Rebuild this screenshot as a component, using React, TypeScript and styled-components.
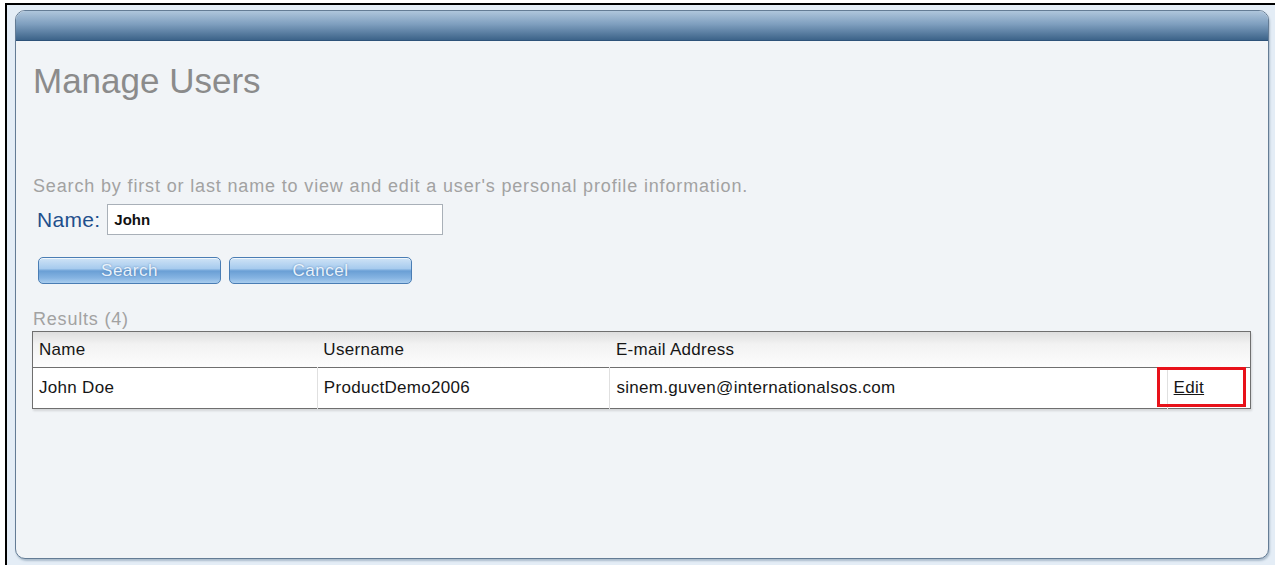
import styled, { createGlobalStyle } from "styled-components";

const GlobalStyle = createGlobalStyle`
    html, body {
        margin: 0;
        padding: 0;
        background: #fff;
    }
    body {
        font-family: "Liberation Sans", Arial, sans-serif;
    }
`;

const Frame = styled.div`
    margin: 3px 0 0 5px;
    height: 562px;
    box-sizing: border-box;
    border-top: 2px solid #000;
    border-left: 2px solid #000;
    background: #e4edf6;
    padding: 5px 6px 6px 8px;
`;

const Panel = styled.div`
    height: 100%;
    box-sizing: border-box;
    display: flex;
    flex-direction: column;
    border: 1px solid #647c95;
    border-radius: 10px;
    background: #f1f4f7;
    box-shadow: 1px 2px 2px rgba(70, 100, 130, 0.35);
    overflow: hidden;
`;

const TitleBar = styled.div`
    height: 29px;
    flex: none;
    background: linear-gradient(#afc6dc, #7f9fbf 45%, #3c6389);
    border-bottom: 1px solid #2d5279;
`;

const Body = styled.div`
    flex: 1;
    padding: 0 16px;
    display: flex;
    flex-direction: column;
`;

const Title = styled.h1`
    margin: 20px 0 0 1px;
    font-size: 35px;
    line-height: 40px;
    font-weight: normal;
    color: #8b8b8b;
`;

const Hint = styled.p`
    margin: 75px 0 0 1px;
    font-size: 18px;
    line-height: 20px;
    letter-spacing: 0.85px;
    color: #a2a2a2;
`;

const FieldRow = styled.div`
    margin: 8px 0 0 5px;
    display: flex;
    align-items: center;
    gap: 7px;
`;

const Label = styled.label`
    font-size: 21px;
    letter-spacing: 0.3px;
    color: #1f4f8c;
`;

const Input = styled.input`
    width: 336px;
    height: 31px;
    box-sizing: border-box;
    border: 1px solid #a9b0b8;
    background: #fff;
    padding: 0 6px;
    font-family: inherit;
    font-size: 15px;
    font-weight: bold;
    color: #111;
    outline: none;
`;

const Buttons = styled.div`
    margin: 22px 0 0 6px;
    display: flex;
    gap: 8px;
`;

const Button = styled.button`
    width: ${p => p.$w}px;
    height: 27px;
    border: 1px solid #4a7db4;
    border-radius: 5px;
    background: linear-gradient(#cfe3f6 0%, #a7cbee 42%, #6a9fd5 52%, #86b4e2 80%, #a9cdef 100%);
    box-shadow: inset 0 1px 0 rgba(255, 255, 255, 0.7);
    color: #e9f2fb;
    font-family: inherit;
    font-size: 17px;
    letter-spacing: 0.5px;
    text-shadow: 0 0 2px rgba(40, 90, 150, 0.6);
    padding: 0;
    cursor: pointer;
`;

const Results = styled.div`
    margin: 25px 0 0 1px;
    font-size: 18px;
    line-height: 20px;
    letter-spacing: 0.8px;
    color: #a2a2a2;
`;

const Table = styled.table`
    margin-top: 2px;
    width: 1219px;
    border-collapse: collapse;
    border: 1px solid #6f6f6f;
    box-shadow: 1px 2px 2px rgba(0, 0, 0, 0.12);
    font-size: 17px;
    letter-spacing: 0.3px;
    color: #161616;
`;

const HeadRow = styled.tr`
    background: linear-gradient(#dedede, #f2f2f2 35%, #fdfdfd);
    border-bottom: 1px solid #6f6f6f;
`;

const Th = styled.th`
    width: ${p => p.$w}px;
    height: 35px;
    padding: 0 0 0 6px;
    text-align: left;
    font-weight: normal;
`;

const DataRow = styled.tr`
    background: #fff;
`;

const Td = styled.td`
    position: relative;
    height: 40px;
    padding: 0 0 0 6px;
    border-left: ${p => (p.$first ? "none" : "1px solid #e0e0e0")};
`;

const EditLink = styled.a`
    color: #161616;
    text-decoration: underline;
`;

const Callout = styled.span`
    position: absolute;
    left: -11px;
    top: -1px;
    right: 4px;
    bottom: 1px;
    border: 3px solid #e8121a;
    pointer-events: none;
`;

const users = [
    { name: "John Doe", username: "ProductDemo2006", email: "sinem.guven@internationalsos.com" },
];

const App = () => {
    return (
        <>
            <GlobalStyle />
            <Frame>
                <Panel>
                    <TitleBar />
                    <Body>
                        <Title>Manage Users</Title>
                        <Hint>Search by first or last name to view and edit a user's personal profile information.</Hint>
                        <FieldRow>
                            <Label htmlFor="name">Name:</Label>
                            <Input id="name" defaultValue="John" />
                        </FieldRow>
                        <Buttons>
                            <Button $w={183}>Search</Button>
                            <Button $w={183}>Cancel</Button>
                        </Buttons>
                        <Results>Results (4)</Results>
                        <Table>
                            <thead>
                                <HeadRow>
                                    <Th $w={279}>Name</Th>
                                    <Th $w={287}>Username</Th>
                                    <Th $w={552}>E-mail Address</Th>
                                    <Th $w={77}></Th>
                                </HeadRow>
                            </thead>
                            <tbody>
                                {users.map(u => (
                                    <DataRow key={u.username}>
                                        <Td $first>{u.name}</Td>
                                        <Td>{u.username}</Td>
                                        <Td>{u.email}</Td>
                                        <Td>
                                            <EditLink href="#">Edit</EditLink>
                                            <Callout />
                                        </Td>
                                    </DataRow>
                                ))}
                            </tbody>
                        </Table>
                    </Body>
                </Panel>
            </Frame>
        </>
    );
};

export default App;
